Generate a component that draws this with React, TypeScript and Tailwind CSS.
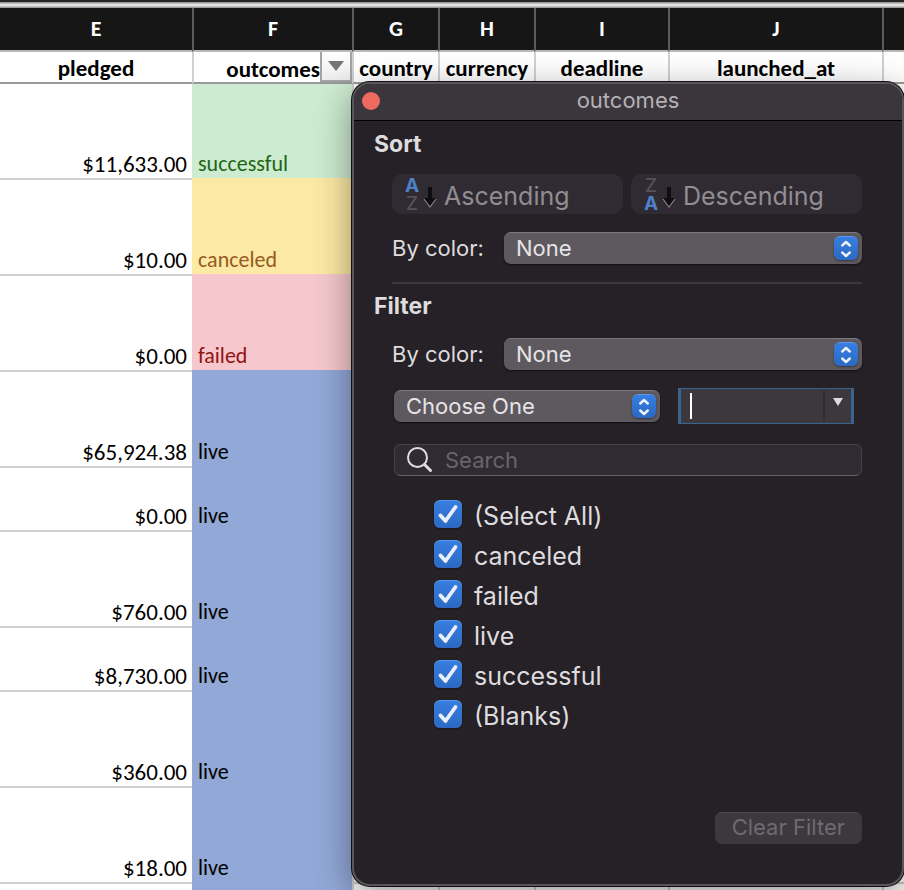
import { useState } from 'react';
import type { ReactNode } from 'react';

const columns = [
  { letter: 'E', title: 'pledged' },
  { letter: 'F', title: 'outcomes' },
  { letter: 'G', title: 'country' },
  { letter: 'H', title: 'currency' },
  { letter: 'I', title: 'deadline' },
  { letter: 'J', title: 'launched_at' },
  { letter: '', title: '' },
];

const tones = {
  successful: 'bg-[#cdebd0] text-[#1f6613]',
  canceled: 'bg-[#fce9a4] text-[#965a1e]',
  failed: 'bg-[#f6c8cd] text-[#931313]',
  live: 'bg-[#92a8d7] text-black',
};

const edges = {
  successful: 'border-[#cdebd0]',
  canceled: 'border-[#fce9a4]',
  failed: 'border-[#f6c8cd]',
  live: 'border-[#92a8d7]',
};

type Outcome = keyof typeof tones;

const rows: { pledged: string; outcome: Outcome; height: string }[] = [
  { pledged: '$11,633.00', outcome: 'successful', height: 'h-24' },
  { pledged: '$10.00', outcome: 'canceled', height: 'h-24' },
  { pledged: '$0.00', outcome: 'failed', height: 'h-24' },
  { pledged: '$65,924.38', outcome: 'live', height: 'h-24' },
  { pledged: '$0.00', outcome: 'live', height: 'h-16' },
  { pledged: '$760.00', outcome: 'live', height: 'h-24' },
  { pledged: '$8,730.00', outcome: 'live', height: 'h-16' },
  { pledged: '$360.00', outcome: 'live', height: 'h-24' },
  { pledged: '$18.00', outcome: 'live', height: 'h-24' },
  { pledged: '', outcome: 'live', height: 'h-16' },
];

function Sheet() {
  return (
    <table className="w-full table-fixed border-separate border-spacing-0 bg-white font-['Carlito','Lato',sans-serif] text-[23px] leading-7 text-black">
      <colgroup>
        <col className="w-[192px]" />
        <col className="w-[160px]" />
        <col className="w-[86px]" />
        <col className="w-[96px]" />
        <col className="w-[134px]" />
        <col className="w-[214px]" />
        <col />
      </colgroup>
      <thead>
        <tr className="h-11 bg-[#161616] text-[22px] text-white">
          {columns.map((c, i) => (
            <th key={i} className="border-b-2 border-l-2 border-b-[#b9b9b9] border-l-[#5c5c5c] p-0 font-bold first:border-l-0">
              {c.letter}
            </th>
          ))}
        </tr>
        <tr className="h-8">
          {columns.map((c, i) => (
            <th key={i} className="border-b-2 border-l-2 border-b-[#999999] border-l-[#d0d0d0] p-0 font-bold whitespace-nowrap first:border-l-0">
              {c.letter === 'F' ? (
                <div className="flex h-[30px] items-center justify-end">
                  <span className="pt-1">{c.title}</span>
                  <button
                    type="button"
                    aria-label="Filter outcomes"
                    className="flex h-[30px] w-8 items-center justify-center border-2 border-t-0 border-[#a3a3a3] bg-linear-to-b from-white to-[#ececec]"
                  >
                    <svg width="16" height="10" viewBox="0 0 16 10" aria-hidden="true">
                      <path d="M0 0h16L8 10z" fill="#757575" />
                    </svg>
                  </button>
                </div>
              ) : (
                <div className="h-[30px] pt-0.5">{c.title}</div>
              )}
            </th>
          ))}
        </tr>
      </thead>
      <tbody>
        {rows.map((r, i) => {
          const next = rows[i + 1] ?? r;
          return (
            <tr key={i} className={r.height}>
              <td className="border-b-2 border-[#d0d0d0] p-0 pr-[5px] text-right align-bottom">{r.pledged}</td>
              <td className={`border-b-2 p-0 pl-1.5 align-bottom text-[22px] ${tones[r.outcome]} ${edges[next.outcome]}`}>
                {r.pledged && r.outcome}
              </td>
              {columns.slice(2).map((c) => (
                <td key={c.letter} className="border-b-2 border-l-2 border-[#d0d0d0] p-0" />
              ))}
            </tr>
          );
        })}
      </tbody>
    </table>
  );
}

function PopUp({ id, value, label, className }: { id: string; value: string; label?: string; className: string }) {
  return (
    <div className={`grid items-center ${className}`}>
      <select
        id={id}
        aria-label={label}
        className="col-start-1 row-start-1 h-8 w-full appearance-none rounded-[7px] border-t border-[#7c787e] bg-[#5d595f] pb-0.5 pl-3 text-[22px] leading-7 text-[#e6e4e6] shadow-[0_1px_2px_rgba(0,0,0,0.5)] outline-none"
      >
        <option>{value}</option>
      </select>
      <span className="pointer-events-none col-start-1 row-start-1 mr-1 flex size-6 items-center justify-center justify-self-end rounded-[6px] border-t border-[#5b97ea] bg-linear-to-b from-[#377ee0] to-[#2b69c4] shadow-[0_1px_2px_rgba(0,0,0,0.4)]">
        <svg width="12" height="18" viewBox="0 0 12 18" fill="none" stroke="#edf2fa" strokeWidth="2.4" strokeLinecap="round" strokeLinejoin="round" aria-hidden="true">
          <path d="M2.200 5.500L6 2l3.800 3.500M2.200 12.500L6 16l3.800-3.500" />
        </svg>
      </span>
    </div>
  );
}

function SortButton({ top, bottom, children }: { top: string; bottom: string; children: ReactNode }) {
  const tone = (l: string) => (l === 'A' ? 'font-bold text-[#4d82c6]' : 'font-medium text-[#555156]');
  return (
    <button type="button" className="flex h-10 flex-1 items-center rounded-[10px] bg-[#302b32] pl-3 text-[25px] text-[#918d92]">
      <span className="flex w-4 flex-col pt-0.5 text-center text-[19px] leading-[18px]">
        <span className={tone(top)}>{top}</span>
        <span className={tone(bottom)}>{bottom}</span>
      </span>
      <svg className="mt-2 ml-[3px] shrink-0" width="14" height="22" viewBox="0 0 14 22" aria-hidden="true">
        <path d="M5 0h4v11h4l-6 9-6-9h4z" fill="#0e0d0f" />
        <path d="M1 12l6 8 6-8" fill="none" stroke="#858186" strokeWidth="1.2" />
      </svg>
      <span className="mt-1 ml-[7px]">{children}</span>
    </button>
  );
}

const choices = ['(Select All)', 'canceled', 'failed', 'live', 'successful', '(Blanks)'];

function Choice({ label }: { label: string }) {
  const [on, setOn] = useState(true);
  return (
    <label className="flex h-7 items-center gap-3 text-[25px]">
      <span className="grid size-7 shrink-0">
        <input
          type="checkbox"
          checked={on}
          onChange={(e) => setOn(e.target.checked)}
          className="col-start-1 row-start-1 size-7 appearance-none rounded-[6px] border-t border-[#5b97ea] bg-[#59555b] shadow-[0_1px_2px_rgba(0,0,0,0.4)] checked:bg-linear-to-b checked:from-[#377ee0] checked:to-[#2b69c4]"
        />
        {on && (
          <svg className="pointer-events-none col-start-1 row-start-1" viewBox="0 0 28 28" fill="none" stroke="#e8effa" strokeWidth="3.800" strokeLinecap="round" strokeLinejoin="round" aria-hidden="true">
            <path d="M6.500 15.500l5 5.500L21.500 7" />
          </svg>
        )}
      </span>
      <span className="pt-1">{label}</span>
    </label>
  );
}

function FilterWindow() {
  return (
    <section
      aria-label="outcomes"
      className="absolute top-[82px] right-0 left-[352px] overflow-hidden rounded-[18px] border-2 border-[#59565b] bg-[#252127] font-['Inter',sans-serif] text-[22px] leading-7 text-[#dedcde] shadow-[0_0_0_1px_#101010,0_10px_36px_rgba(0,0,0,0.42)]"
    >
      <header className="grid h-[37px] grid-cols-[1fr_auto_1fr] items-center border-b border-black bg-[#3b363c] px-2 pb-0.5">
        <button type="button" aria-label="Close" className="size-[18px] rounded-full bg-[#ed6a5f]" />
        <h1 className="pb-0.5 text-[#b4b1b5]">outcomes</h1>
      </header>
      <div className="pt-[9px] pr-10 pb-10 pl-5">
        <h2 className="text-[23px] font-bold">Sort</h2>
        <div className="pl-[18px]">
          <div className="mt-4 flex gap-2">
            <SortButton top="A" bottom="Z">Ascending</SortButton>
            <SortButton top="Z" bottom="A">Descending</SortButton>
          </div>
          <div className="mt-[18px] flex items-center">
            <label htmlFor="sort-color" className="w-28">By color:</label>
            <PopUp id="sort-color" value="None" className="flex-1" />
          </div>
          <hr className="mt-[18px] border-t-2 border-[#3b373d]" />
        </div>
        <h2 className="mt-2 text-[23px] font-bold">Filter</h2>
        <div className="pl-[18px]">
          <div className="mt-[18px] flex items-center">
            <label htmlFor="filter-color" className="w-28">By color:</label>
            <PopUp id="filter-color" value="None" className="flex-1" />
          </div>
          <div className="mt-[18px] flex items-center gap-[18px] pr-2 pl-0.5">
            <PopUp id="condition" value="Choose One" label="Condition" className="flex-1" />
            <div className="flex h-9 w-44 border-x-3 border-y border-[#38648f] bg-[#3b383e]">
              <span className="my-1 ml-[9px] w-0.5 bg-white" />
              <input type="text" aria-label="Condition value" className="w-0 flex-1 bg-transparent px-1 caret-transparent outline-none" />
              <button type="button" aria-label="Show values" className="my-px flex w-7 justify-center border-l-2 border-[#302d33] pt-2">
                <svg width="10" height="8" viewBox="0 0 10 8" aria-hidden="true">
                  <path d="M0 0h10L5 8z" fill="#dedcde" />
                </svg>
              </button>
            </div>
          </div>
          <div className="mt-5 ml-0.5 flex h-8 items-center gap-3 rounded-[7px] border border-[#454147] border-b-[#625e64] bg-[#302b32] pl-3">
            <svg className="shrink-0" width="26" height="26" viewBox="0 0 26 26" fill="none" stroke="#dedcde" aria-hidden="true">
              <circle cx="10.500" cy="10.500" r="9.500" strokeWidth="2" />
              <path d="M17.500 17.500l6 6" strokeWidth="3" strokeLinecap="round" />
            </svg>
            <input type="search" aria-label="Search" placeholder="Search" className="w-0 flex-1 bg-transparent outline-none placeholder:text-[#68646a]" />
          </div>
          <div className="mt-6 flex flex-col gap-3 pl-[42px]">
            {choices.map((c) => (
              <Choice key={c} label={c} />
            ))}
          </div>
          <div className="mt-[84px] flex justify-end">
            <button type="button" className="h-8 rounded-[7px] border-t border-[#4c484e] bg-[#3c383e] px-[17px] pb-1 leading-7 text-[#6e6a70]">
              Clear Filter
            </button>
          </div>
        </div>
      </div>
    </section>
  );
}

export default function App() {
  return (
    <main className="relative h-screen overflow-hidden bg-white">
      <div className="h-2 border-t-2 border-[#242424] bg-linear-to-b from-[#8a8a8a] via-[#f4f4f4] to-[#8a8a8a]" />
      <Sheet />
      <FilterWindow />
    </main>
  );
}
